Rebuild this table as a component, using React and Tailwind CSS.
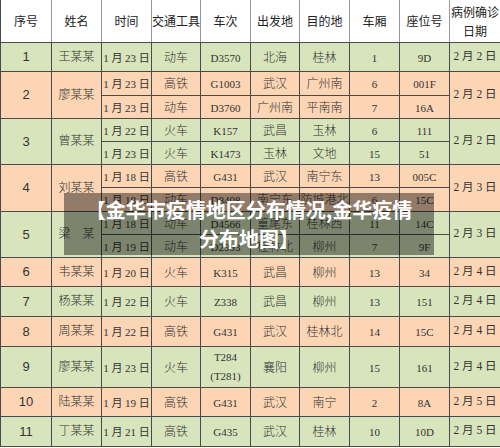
import React from "react";

const G = "bg-[#d8e4bc]";
const O = "bg-[#fcd5b4]";

const groups = [
  { n: "1", name: "王某某", c: G, date: "2 月 2 日", subs: [{ h: "h-[29px]", d: ["1 月 23 日", "动车", "D3570", "北海", "桂林", "1", "9D"] }] },
  { n: "2", name: "廖某某", c: O, date: "2 月 2 日", subs: [
    { h: "h-[24px]", d: ["1 月 23 日", "高铁", "G1003", "武汉", "广州南", "6", "001F"] },
    { h: "h-[23px]", d: ["1 月 23 日", "动车", "D3760", "广州南", "平南南", "7", "16A"] },
  ] },
  { n: "3", name: "曾某某", c: G, date: "2 月 2 日", subs: [
    { h: "h-[23px]", d: ["1 月 22 日", "火车", "K157", "武昌", "玉林", "6", "111"] },
    { h: "h-[23px]", d: ["1 月 23 日", "火车", "K1473", "玉林", "文地", "15", "51"] },
  ] },
  { n: "4", name: "刘某某", c: O, date: "2 月 3 日", subs: [
    { h: "h-[23px]", d: ["1 月 18 日", "高铁", "G431", "武汉", "南宁东", "13", "005C"] },
    { h: "h-[24px]", d: ["1 月 18 日", "动车", "D8408", "南宁东", "防城港北", "6", "15C"] },
  ] },
  { n: "5", name: "梁　某", c: G, date: "2 月 3 日", subs: [
    { h: "h-[23px]", d: ["1 月 18 日", "动车", "D4566", "篁尾东", "桂林西", "11", "14C"] },
    { h: "h-[23px]", d: ["1 月 19 日", "动车", "D2993", "桂林北", "柳州", "7", "9F"] },
  ] },
  { n: "6", name: "韦某某", c: O, date: "2 月 4 日", subs: [{ h: "h-[29px]", d: ["1 月 20 日", "火车", "K315", "武昌", "柳州", "13", "34"] }] },
  { n: "7", name: "杨某某", c: G, date: "2 月 4 日", subs: [{ h: "h-[30px]", d: ["1 月 22 日", "火车", "Z338", "武昌", "柳州", "13", "151"] }] },
  { n: "8", name: "周某某", c: O, date: "2 月 4 日", subs: [{ h: "h-[30px]", d: ["1 月 22 日", "高铁", "G431", "武汉", "桂林北", "14", "15C"] }] },
  { n: "9", name: "廖某某", c: G, date: "2 月 4 日", subs: [{ h: "h-[41px]", d: ["1 月 23 日", "火车", "T284|(T281)", "襄阳", "柳州", "15", "161"] }] },
  { n: "10", name: "陆某某", c: O, date: "2 月 5 日", subs: [{ h: "h-[29px]", d: ["1 月 19 日", "高铁", "G431", "武汉", "南宁", "2", "8A"] }] },
  { n: "11", name: "丁某某", c: G, date: "2 月 5 日", subs: [{ h: "h-[30px]", d: ["1 月 21 日", "高铁", "G435", "武汉", "桂林", "10", "10D"] }] },
];

const td = "border border-[#4a4a4a] text-center align-middle p-0 text-[#333] leading-none";
const dataFont = { fontFamily: '"Liberation Serif", "Noto Sans CJK SC", serif' };

function Cell({ v, idx }) {
  if (idx === 0) {
    return <span className="text-[11px] whitespace-nowrap">{v}</span>;
  }
  if (idx === 2 || idx === 5 || idx === 6) {
    if (v.includes("|")) {
      const [a, b] = v.split("|");
      return (
        <div className="flex flex-col items-center gap-[8px] text-[11px]">
          <span>{a}</span>
          <span>{b}</span>
        </div>
      );
    }
    return <span className="text-[11px]">{v}</span>;
  }
  return <span className="text-[12px] font-light whitespace-nowrap">{v}</span>;
}

export default function App() {
  const headers = ["序号", "姓名", "时间", "交通工具", "车次", "出发地", "目的地", "车厢", "座位号"];
  return (
    <div className="relative w-[500px] h-[448px] bg-white overflow-hidden" style={{ fontFamily: '"Noto Sans CJK SC", sans-serif' }}>
      <table className="table-fixed border-collapse w-[500px]">
        <colgroup>
          <col className="w-[51px]" />
          <col className="w-[50px]" />
          <col className="w-[50px]" />
          <col className="w-[49px]" />
          <col className="w-[50px]" />
          <col className="w-[49px]" />
          <col className="w-[50px]" />
          <col className="w-[50px]" />
          <col className="w-[50px]" />
          <col className="w-[51px]" />
        </colgroup>
        <tbody>
          <tr className="h-[42px] bg-white">
            {headers.map((h, i) => (
              <td key={i} className="border-x border-b border-[#9a9a9a] border-b-[#4a4a4a] text-center align-middle p-0 text-[12px] text-[#222] whitespace-nowrap first:border-l-[#4a4a4a]">
                {h}
              </td>
            ))}
            <td className="border-x border-b border-[#9a9a9a] border-r-[#4a4a4a] border-b-[#4a4a4a] text-center align-middle p-0 text-[12px] text-[#222] leading-[19px]">
              病例确诊<br />日期
            </td>
          </tr>
          {groups.map((g) =>
            g.subs.map((s, si) => (
              <tr key={g.n + "-" + si} className={`${s.h} ${g.c}`}>
                {si === 0 && (
                  <td rowSpan={g.subs.length} className={`${td} text-[13px]`} style={{ fontFamily: '"Liberation Sans", sans-serif' }}>
                    {g.n}
                  </td>
                )}
                {si === 0 && (
                  <td rowSpan={g.subs.length} className={`${td} text-[12px] font-light whitespace-nowrap`} style={dataFont}>
                    {g.name}
                  </td>
                )}
                {s.d.map((v, i) => (
                  <td key={i} className={td} style={dataFont}>
                    <Cell v={v} idx={i} />
                  </td>
                ))}
                {si === 0 && (
                  <td rowSpan={g.subs.length} className={`${td} text-[11.5px] whitespace-nowrap`} style={dataFont}>
                    {g.date}
                  </td>
                )}
              </tr>
            ))
          )}
        </tbody>
      </table>
      <div className="absolute left-[64px] top-[193px] w-[370px] h-[62px] bg-[rgba(0,0,0,0.42)] flex flex-col items-center justify-center text-white font-bold text-[20px] leading-[29px]">
        <span>【金华市疫情地区分布情况,金华疫情</span>
        <span>分布地图】</span>
      </div>
    </div>
  );
}
